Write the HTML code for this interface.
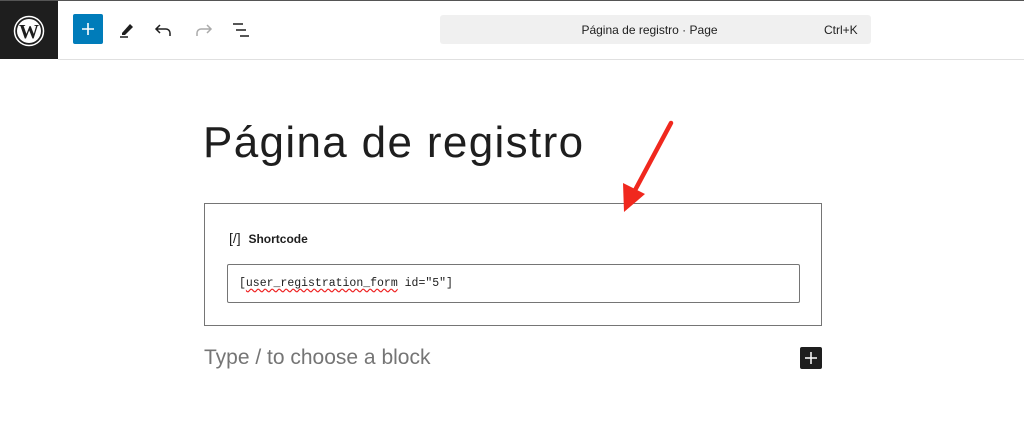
<!DOCTYPE html>
<html><head><meta charset="utf-8"><style>
body{margin:0;width:1024px;height:441px;background:#fff;font-family:"Liberation Sans",sans-serif;position:relative;overflow:hidden}
.a{position:absolute}
</style></head><body>
<div class="a" style="left:0;top:0;width:1024px;height:1px;background:#555"></div>
<div class="a" style="left:0;top:1px;width:58px;height:58px;background:#1e1e1e"></div>
<svg class="a" style="left:13px;top:15px" width="32" height="32" viewBox="0 0 32 32"><circle cx="16" cy="16" r="14.5" fill="none" stroke="#fff" stroke-width="1.5"/><circle cx="16" cy="16" r="12" fill="#fff"/><text x="16" y="23" text-anchor="middle" font-family="Liberation Serif" font-weight="bold" font-size="20" fill="#1e1e1e">W</text></svg>
<div class="a" style="left:58px;top:59px;width:966px;height:1px;background:#e0e0e0"></div>
<div class="a" style="left:73px;top:14px;width:30px;height:30px;background:#007cba;border-radius:2px"></div>
<svg class="a" style="left:73px;top:14px" width="30" height="30"><path d="M15 9v12M9 15h12" stroke="#fff" stroke-width="1.6"/></svg>
<svg class="a" style="left:116px;top:18px" width="20" height="22"><path d="M6 15l8-9 3 3-8 8h-3z" fill="#1e1e1e"/><path d="M4 19h8" stroke="#1e1e1e" stroke-width="1.5"/></svg>
<svg class="a" style="left:154px;top:20px" width="22" height="18"><path d="M6 5l-4 4 4 4M2 9h10a4 4 0 0 1 4 4v3" fill="none" stroke="#1e1e1e" stroke-width="1.5"/></svg>
<svg class="a" style="left:193px;top:20px" width="22" height="18"><path d="M14 5l4 4-4 4M18 9h-10a4 4 0 0 0-4 4v3" fill="none" stroke="#aaa" stroke-width="1.5"/></svg>
<svg class="a" style="left:230px;top:20px" width="24" height="20"><path d="M3 4h10M6 10h10M10 16h9" stroke="#1e1e1e" stroke-width="1.6"/></svg>
<div class="a" style="left:440px;top:15px;width:431px;height:29px;background:#f0f0f0;border-radius:3px"></div>
<div class="a" style="left:434px;top:23px;width:431px;text-align:center;font-size:12px;color:#1e1e1e">Página de registro · Page</div>
<div class="a" style="left:824px;top:23px;font-size:12px;color:#1e1e1e">Ctrl+K</div>
<div class="a" style="left:203px;top:118px;font-size:44px;color:#1e1e1e;letter-spacing:1.35px">Página de registro</div>
<div class="a" style="left:204px;top:203px;width:616px;height:121px;border:1px solid #757575"></div>
<div class="a" style="left:229px;top:230px;font-size:14px;color:#1e1e1e">[/]&nbsp; <span style="font-size:12px;font-weight:bold">Shortcode</span></div>
<div class="a" style="left:227px;top:264px;width:571px;height:37px;border:1px solid #757575;border-radius:2px"></div>
<div class="a" style="left:239px;top:277px;font-family:'Liberation Mono',monospace;font-size:11.5px;color:#1e1e1e">[<span style="text-decoration:underline wavy #e22;text-underline-offset:2px">user_registration_form</span> id="5"]</div>
<div class="a" style="left:204px;top:346px;font-size:21px;color:#757575">Type / to choose a block</div>
<div class="a" style="left:800px;top:347px;width:22px;height:22px;background:#1e1e1e;border-radius:2px"></div>
<svg class="a" style="left:800px;top:347px" width="22" height="22"><path d="M11 5v12M5 11h12" stroke="#fff" stroke-width="1.5"/></svg>
<svg class="a" style="left:600px;top:110px" width="90" height="115"><path d="M71 13L33 84" stroke="#f0281e" stroke-width="4.5" stroke-linecap="round"/><path d="M24 102L23 73L45 84Z" fill="#f0281e"/></svg>
</body></html>
